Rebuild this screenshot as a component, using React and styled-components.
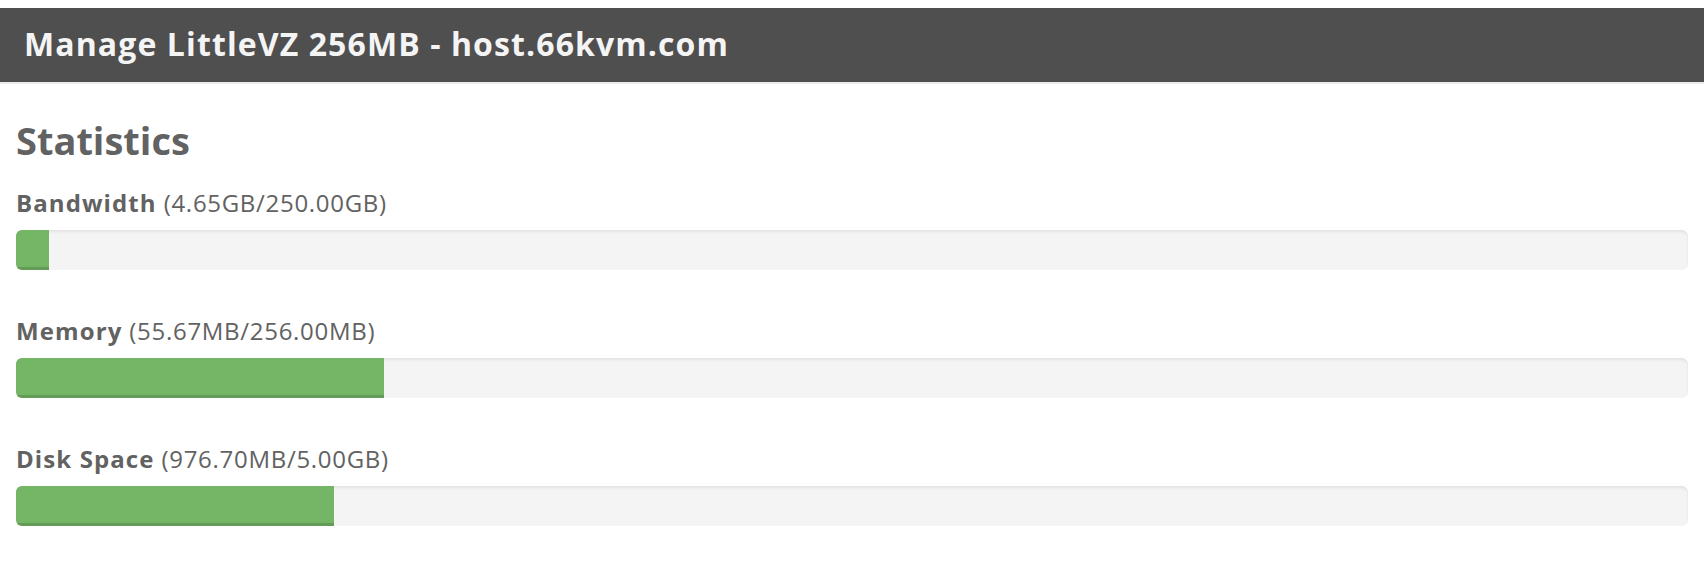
import React from 'react';
import styled, { createGlobalStyle } from 'styled-components';

const GlobalStyle = createGlobalStyle`
  body {
    margin: 0;
    background: #ffffff;
    font-family: "Open Sans", "Liberation Sans", sans-serif;
  }
`;

const Page = styled.div`
  padding-top: 8px;
`;

const TitleBar = styled.header`
  display: flex;
  align-items: center;
  height: 74px;
  padding: 0 24px;
  background: #4f4f4f;
  border-bottom: 2px solid #ececec;
`;

const Title = styled.h1`
  margin: 0 0 3px;
  font-size: 32px;
  font-weight: 700;
  letter-spacing: 1.1px;
  color: #f4f4f4;
`;

const Content = styled.section`
  padding: 34px 16px 0;
`;

const Heading = styled.h2`
  margin: 0 0 26px;
  font-size: 38px;
  line-height: 44px;
  font-weight: 700;
  color: #626262;
`;

const Stat = styled.div`
  margin-bottom: 46px;
`;

const Label = styled.div`
  font-size: 24px;
  line-height: 30px;
  letter-spacing: 0.7px;
  color: #626262;
  margin-bottom: 12px;

  strong {
    font-weight: 700;
    letter-spacing: 1.1px;
  }
`;

const Track = styled.div`
  display: flex;
  height: 40px;
  border-radius: 6px;
  overflow: hidden;
  background: #f4f4f4;
  box-shadow: inset 0 2px 3px rgba(0, 0, 0, 0.07);
`;

const Fill = styled.div`
  height: 100%;
  background: #74b566;
  box-shadow: inset 0 -3px 0 rgba(0, 0, 0, 0.14);
`;

const stats = [
  { name: 'Bandwidth', value: '(4.65GB/250.00GB)', pct: 2 },
  { name: 'Memory', value: '(55.67MB/256.00MB)', pct: 22 },
  { name: 'Disk Space', value: '(976.70MB/5.00GB)', pct: 19 },
];

const App = () => (
  <Page>
    <GlobalStyle />
    <TitleBar>
      <Title>Manage LittleVZ 256MB - host.66kvm.com</Title>
    </TitleBar>
    <Content>
      <Heading>Statistics</Heading>
      {stats.map((s) => (
        <Stat key={s.name}>
          <Label>
            <strong>{s.name}</strong> {s.value}
          </Label>
          <Track>
            <Fill style={{ width: `${s.pct}%` }} />
          </Track>
        </Stat>
      ))}
    </Content>
  </Page>
);

export default App;
